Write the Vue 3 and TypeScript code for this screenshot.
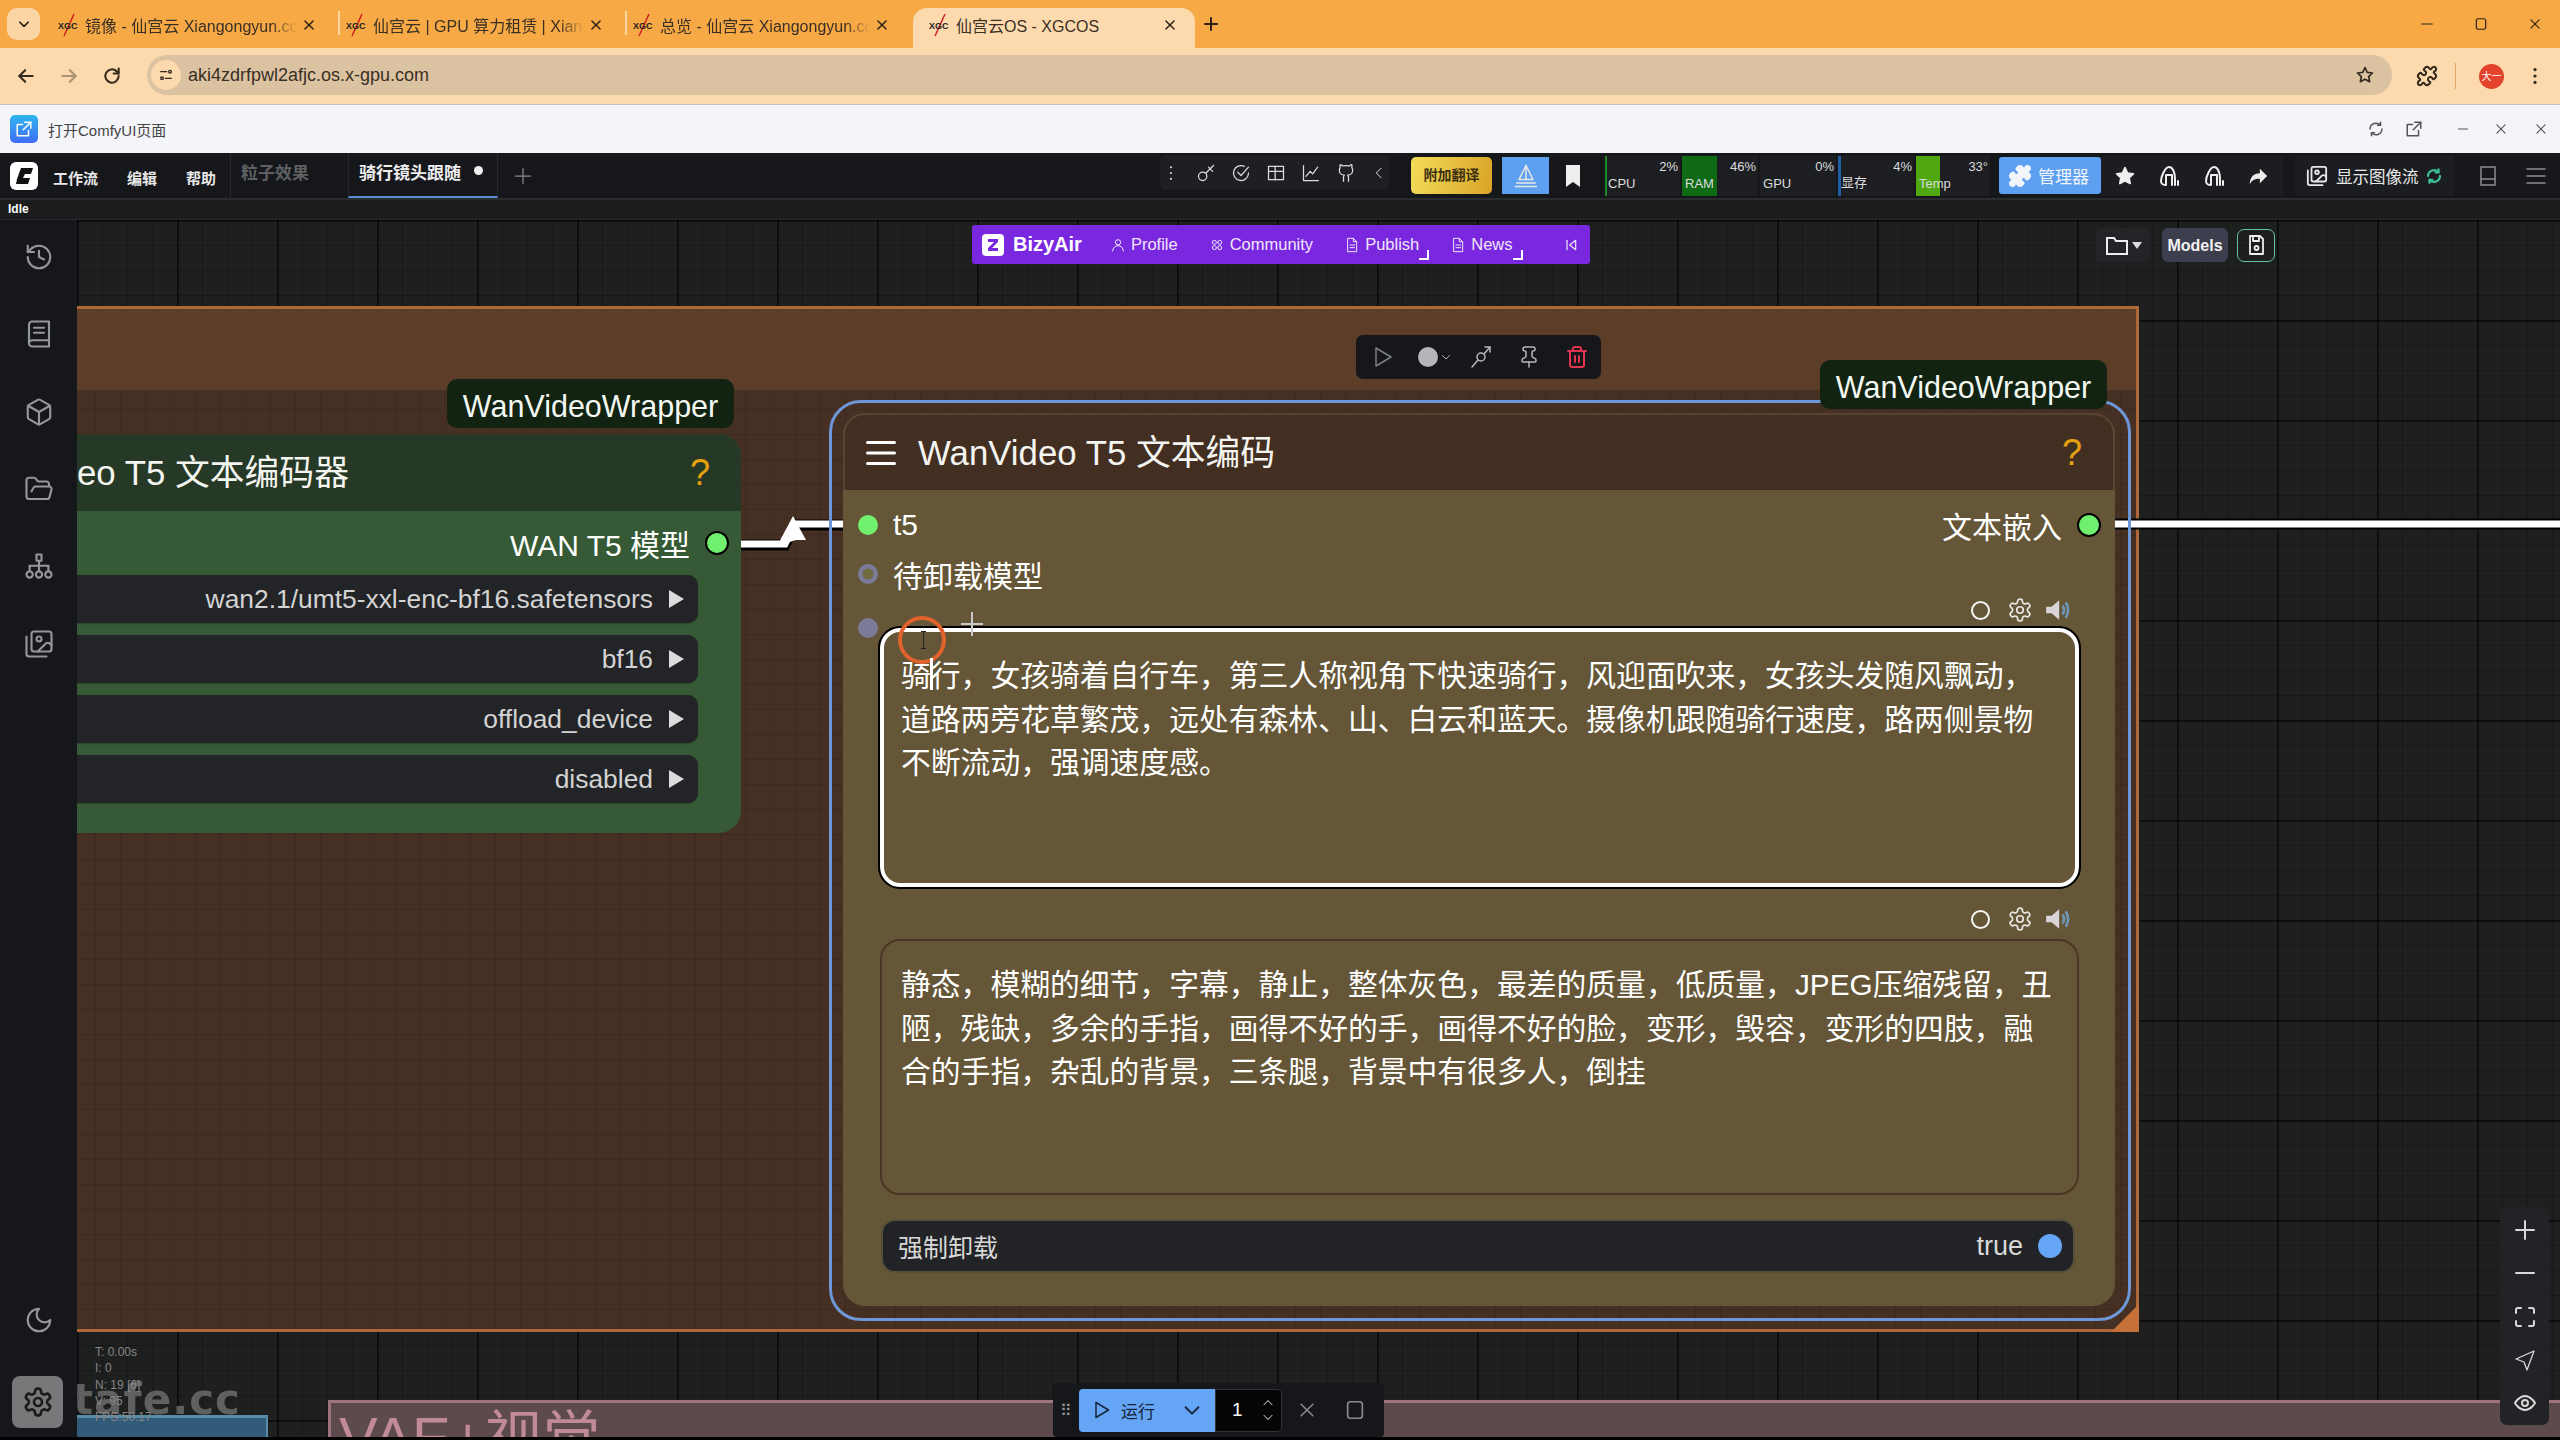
<script setup lang="ts">
import { h } from 'vue';

// stroked icon, paths in a 24x24 box
const Ico = (props: { d: string[]; size?: number; sw?: number }) =>
  h(
    'svg',
    {
      width: props.size ?? 24,
      height: props.size ?? 24,
      viewBox: '0 0 24 24',
      fill: 'none',
      stroke: 'currentColor',
      'stroke-width': props.sw ?? 2,
      'stroke-linecap': 'round',
      'stroke-linejoin': 'round',
      style: 'flex:none;display:block',
    },
    props.d.map((d) => h('path', { d })),
  );
Ico.props = ['d', 'size', 'sw'];

const i = {
  history: ['M3 12a9 9 0 1 0 9-9 9.75 9.75 0 0 0-6.74 2.74L3 8', 'M3 3v5h5', 'M12 7v5l4 2'],
  book: ['M4 19.5v-15A2.5 2.5 0 0 1 6.5 2H20v20H6.5a2.5 2.5 0 0 1 0-5H20', 'M8 7h8', 'M8 11h8'],
  box: ['M21 8a2 2 0 0 0-1-1.73l-7-4a2 2 0 0 0-2 0l-7 4A2 2 0 0 0 3 8v8a2 2 0 0 0 1 1.73l7 4a2 2 0 0 0 2 0l7-4A2 2 0 0 0 21 16Z', 'm3.3 7 8.7 5 8.7-5', 'M12 22V12'],
  folder: ['m6 14 1.5-2.9A2 2 0 0 1 9.24 10H20a2 2 0 0 1 1.94 2.5l-1.54 6a2 2 0 0 1-1.95 1.5H4a2 2 0 0 1-2-2V5a2 2 0 0 1 2-2h3.9a2 2 0 0 1 1.69.9l.81 1.2a2 2 0 0 0 1.67.9H18a2 2 0 0 1 2 2v2'],
  tree: ['M10 2h4v5h-4z', 'M12 7v8', 'M4.500 11h15', 'M4.500 11v4', 'M19.500 11v4', 'M4.500 18m-2.500 0a2.500 2.500 0 1 0 5 0a2.500 2.500 0 1 0-5 0', 'M12 18m-2.500 0a2.500 2.500 0 1 0 5 0a2.500 2.500 0 1 0-5 0', 'M19.500 18m-2.500 0a2.500 2.500 0 1 0 5 0a2.500 2.500 0 1 0-5 0'],
  images: ['M18 22H4a2 2 0 0 1-2-2V6', 'm22 13-1.3-1.3a2.4 2.4 0 0 0-3.4 0L11 18', 'M12 8m-2 0a2 2 0 1 0 4 0a2 2 0 1 0-4 0', 'M8 2h12a2 2 0 0 1 2 2v12a2 2 0 0 1-2 2H8a2 2 0 0 1-2-2V4a2 2 0 0 1 2-2z'],
  moon: ['M12 3a6 6 0 0 0 9 9 9 9 0 1 1-9-9Z'],
  gear: ['M12.22 2h-.44a2 2 0 0 0-2 2v.18a2 2 0 0 1-1 1.73l-.43.25a2 2 0 0 1-2 0l-.15-.08a2 2 0 0 0-2.73.73l-.22.38a2 2 0 0 0 .73 2.73l.15.1a2 2 0 0 1 1 1.72v.51a2 2 0 0 1-1 1.74l-.15.09a2 2 0 0 0-.73 2.73l.22.38a2 2 0 0 0 2.73.73l.15-.08a2 2 0 0 1 2 0l.43.25a2 2 0 0 1 1 1.73V20a2 2 0 0 0 2 2h.44a2 2 0 0 0 2-2v-.18a2 2 0 0 1 1-1.73l.43-.25a2 2 0 0 1 2 0l.15.08a2 2 0 0 0 2.73-.73l.22-.39a2 2 0 0 0-.73-2.73l-.15-.08a2 2 0 0 1-1-1.74v-.5a2 2 0 0 1 1-1.74l.15-.09a2 2 0 0 0 .73-2.73l-.22-.38a2 2 0 0 0-2.73-.73l-.15.08a2 2 0 0 1-2 0l-.43-.25a2 2 0 0 1-1-1.73V4a2 2 0 0 0-2-2z', 'M12 12m-3 0a3 3 0 1 0 6 0a3 3 0 1 0-6 0'],
  trash: ['M3 6h18', 'M19 6v14c0 1-1 2-2 2H7c-1 0-2-1-2-2V6', 'M8 6V4c0-1 1-2 2-2h4c1 0 2 1 2 2v2', 'M10 11v6', 'M14 11v6'],
  pin: ['M12 17v5', 'M9 10.76a2 2 0 0 1-1.11 1.79l-1.78.9A2 2 0 0 0 5 15.24V16a1 1 0 0 0 1 1h12a1 1 0 0 0 1-1v-.76a2 2 0 0 0-1.11-1.79l-1.78-.9A2 2 0 0 1 15 10.76V7a1 1 0 0 1 1-1 2 2 0 0 0 0-4H8a2 2 0 0 0 0 4 1 1 0 0 1 1 1z'],
  play: ['M6 3l15 9-15 9z'],
  link: ['M3 22l6-7', 'M15 9l6-7', 'M16 2h5v5', 'M12 12m-4 0a4 4 0 1 0 8 0a4 4 0 1 0-8 0'],
  key: ['M8 16m-5 0a5 5 0 1 0 10 0a5 5 0 1 0-10 0', 'M12 12l9-9', 'M17 7l3 3', 'M15 5l2 2'],
  check: ['M21 12a9 9 0 1 1-5-8', 'M8 11l4 4 9-10'],
  table: ['M3 4h18v16H3z', 'M3 10h18', 'M11 4v16'],
  chart: ['M3 3v18h18', 'M6 16l5-6 3 3 6-8'],
  github: ['M15 22v-4a4.8 4.8 0 0 0-1-3.5c3 0 6-2 6-5.5.08-1.25-.27-2.48-1-3.5.28-1.15.28-2.35 0-3.5 0 0-1 0-3 1.5-2.64-.5-5.36-.5-8 0C6 2 5 2 5 2c-.3 1.15-.3 2.35 0 3.5A5.4 5.4 0 0 0 4 9c0 3.5 3 5.5 6 5.5-.39.49-.68 1.05-.85 1.65-.17.6-.22 1.23-.15 1.85v4'],
  doc: ['M6 2h8l5 5v15H6z', 'M14 2v5h5', 'M9 12h7', 'M9 16h7'],
  user: ['M12 8m-4 0a4 4 0 1 0 8 0a4 4 0 1 0-8 0', 'M4 21c0-5 4-8 8-8s8 3 8 8'],
  community: ['M8 8m-3 0a3 3 0 1 0 6 0a3 3 0 1 0-6 0', 'M16 8m-3 0a3 3 0 1 0 6 0a3 3 0 1 0-6 0', 'M8 16m-3 0a3 3 0 1 0 6 0a3 3 0 1 0-6 0', 'M16 16m-3 0a3 3 0 1 0 6 0a3 3 0 1 0-6 0'],
  plus: ['M12 3v18', 'M3 12h18'],
  minus: ['M3 12h18'],
  fit: ['M8 3H5a2 2 0 0 0-2 2v3', 'M21 8V5a2 2 0 0 0-2-2h-3', 'M3 16v3a2 2 0 0 0 2 2h3', 'M16 21h3a2 2 0 0 0 2-2v-3'],
  send: ['M21 3L3 11l8 3 3 8z'],
  eye: ['M2 12s4-7 10-7 10 7 10 7-4 7-10 7-10-7-10-7z', 'M12 12m-3 0a3 3 0 1 0 6 0a3 3 0 1 0-6 0'],
  back: ['M20 12H4', 'M11 5l-7 7 7 7'],
  forward: ['M4 12h16', 'M13 5l7 7-7 7'],
  reload: ['M20 12a8 8 0 1 1-2.5-5.8L20 9', 'M20 3v6h-6'],
  star: ['M12 3l2.7 5.8 6.3.8-4.6 4.3 1.2 6.2L12 17l-5.6 3.1 1.2-6.2L3 9.6l6.3-.8z'],
  puzzle: ['M19.439 7.85c-.049.322.059.648.289.878l1.568 1.568c.47.47.706 1.087.706 1.704s-.235 1.233-.706 1.704l-1.611 1.611a.98.98 0 0 1-.837.276c-.47-.07-.802-.48-.968-.925a2.501 2.501 0 1 0-3.214 3.214c.446.166.855.497.925.968a.979.979 0 0 1-.276.837l-1.61 1.61a2.404 2.404 0 0 1-1.705.707 2.402 2.402 0 0 1-1.704-.706l-1.568-1.568a1.026 1.026 0 0 0-.877-.29c-.493.074-.84.504-1.02.968a2.5 2.5 0 1 1-3.237-3.237c.464-.18.894-.527.967-1.02a1.026 1.026 0 0 0-.289-.877l-1.568-1.568A2.402 2.402 0 0 1 1.998 12c0-.617.236-1.234.706-1.704L4.23 8.77c.24-.24.581-.353.917-.303.515.077.877.528 1.073 1.01a2.5 2.5 0 1 0 3.259-3.259c-.482-.196-.933-.558-1.01-1.073-.05-.336.062-.676.303-.917l1.525-1.525A2.402 2.402 0 0 1 12 1.998c.617 0 1.234.236 1.704.706l1.568 1.568c.23.23.556.338.877.29.493-.074.84-.504 1.02-.968a2.5 2.5 0 1 1 3.237 3.237c-.464.18-.894.527-.967 1.02Z'],
  tune: ['M4 7h9', 'M18 7m-2 0a2 2 0 1 0 4 0a2 2 0 1 0-4 0', 'M11 17h9', 'M6 17m-2 0a2 2 0 1 0 4 0a2 2 0 1 0-4 0'],
  panel: ['M5 3h14v18H5z', 'M5 15h14'],
  menu: ['M3 5h18', 'M3 12h18', 'M3 19h18'],
  close: ['M5 5l14 14', 'M19 5L5 19'],
  chevron: ['M5 9l7 7 7-7'],
  up: ['M5 15l7-7 7 7'],
  left: ['M15 5l-7 7 7 7'],
  stop: ['M7 3h10a3 3 0 0 1 3 3v12a3 3 0 0 1-3 3H7a3 3 0 0 1-3-3V6a3 3 0 0 1 3-3z'],
  open: ['M13 3h8v8', 'M21 3l-10 10', 'M18 14v7H3V6h7'],
  refresh: ['M20 12a8 8 0 0 1-14 5', 'M4 12a8 8 0 0 1 14-5', 'M18 3v4h-4', 'M6 21v-4h4'],
  floppy: ['M6 3h10l3 3v15H6z', 'M9 3v5h6V3', 'M12.5 15m-2 0a2 2 0 1 0 4 0a2 2 0 1 0-4 0'],
  dots: ['M12 5h.01', 'M12 12h.01', 'M12 19h.01'],
  collapse: ['M6 5v14', 'M19 5l-9 7 9 7z'],
  shape: ['M8 21a4 4 0 0 1-4-4c0-4 4-14 8-14s6 6 6 12', 'M9 21V11h6v10', 'M18 15v6', 'M21 21v-4'],
  peak: ['M12 3L6 15h12z', 'M12 3v12', 'M4 18h16', 'M3 21h18'],
};

const tabs = [
  { title: '镜像 - 仙宫云 Xiangongyun.com', w: 288, active: false },
  { title: '仙宫云 | GPU 算力租赁 | Xiangongyun', w: 287, active: false },
  { title: '总览 - 仙宫云 Xiangongyun.com', w: 286, active: false },
  { title: '仙宫云OS - XGCOS', w: 282, active: true },
];

const monitors = [
  { label: 'CPU', value: '2%', pct: 2, color: '#1c8a28', w: 75 },
  { label: 'RAM', value: '46%', pct: 46, color: '#0f6a14', w: 76 },
  { label: 'GPU', value: '0%', pct: 0, color: '#1c1e21', w: 76 },
  { label: '显存', value: '4%', pct: 4, color: '#1f5fa8', w: 76 },
  { label: 'Temp', value: '33°', pct: 33, color: '#4fa80f', w: 74 },
];

const leftWidgets = ['wan2.1/umt5-xxl-enc-bf16.safetensors', 'bf16', 'offload_device', 'disabled'];
const stats = ['T: 0.00s', 'I: 0', 'N: 19 [6]', 'V: 95', 'FPS:50.17'];

const positive = '骑行，女孩骑着自行车，第三人称视角下快速骑行，风迎面吹来，女孩头发随风飘动，道路两旁花草繁茂，远处有森林、山、白云和蓝天。摄像机跟随骑行速度，路两侧景物不断流动，强调速度感。';
const negative = '静态，模糊的细节，字幕，静止，整体灰色，最差的质量，低质量，JPEG压缩残留，丑陋，残缺，多余的手指，画得不好的手，画得不好的脸，变形，毁容，变形的四肢，融合的手指，杂乱的背景，三条腿，背景中有很多人，倒挂';
</script>

<template>
  <div class="page">
    <!-- browser tabs -->
    <div class="tabstrip">
      <div class="tab-menu"><Ico :d="i.chevron" :size="14" :sw="3" /></div>
      <div class="tabs">
        <div v-for="t in tabs" :key="t.title" class="tab" :class="{ active: t.active }" :style="{ width: t.w + 'px' }">
          <svg class="fav" width="24" height="26" viewBox="0 0 24 26">
            <path d="M8 24L18 2" stroke="#c22" stroke-width="1.5" />
            <text x="2" y="17" font-size="9" font-weight="700" fill="#222">XGC</text>
          </svg>
          <span class="tab-title">{{ t.title }}</span>
          <Ico :d="i.close" :size="14" :sw="2.5" class="tab-x" />
        </div>
      </div>
      <Ico :d="i.plus" :size="16" :sw="3" class="new-tab" />
      <div class="win">
        <Ico :d="i.minus" :size="14" />
        <Ico :d="i.stop" :size="14" />
        <Ico :d="i.close" :size="14" />
      </div>
    </div>

    <!-- address bar -->
    <div class="urlbar">
      <div class="nav">
        <Ico :d="i.back" :size="20" :sw="2.5" />
        <Ico :d="i.forward" :size="20" :sw="2.5" class="faded" />
        <Ico :d="i.reload" :size="20" :sw="2.5" />
      </div>
      <div class="omni">
        <span class="site"><Ico :d="i.tune" :size="16" /></span>
        <span class="url">aki4zdrfpwl2afjc.os.x-gpu.com</span>
        <Ico :d="i.star" :size="20" class="omni-star" />
      </div>
      <Ico :d="i.puzzle" :size="22" :sw="2.2" class="ext" />
      <span class="sep"></span>
      <span class="avatar">大一</span>
      <Ico :d="i.dots" :size="22" :sw="3.5" class="more" />
    </div>

    <!-- host app header -->
    <div class="apphead">
      <span class="appicon"><Ico :d="i.open" :size="18" /></span>
      <span class="apptitle">打开ComfyUI页面</span>
      <div class="appctl">
        <Ico :d="i.refresh" :size="18" />
        <Ico :d="i.open" :size="18" />
        <Ico :d="i.minus" :size="12" class="ml" />
        <Ico :d="i.close" :size="14" class="ml2" />
        <Ico :d="i.close" :size="14" class="ml3" />
      </div>
    </div>

    <!-- comfy menu -->
    <div class="menubar">
      <div class="logo">
        <svg width="20" height="20" viewBox="0 0 20 20"><path d="M7 2h12l-2 6H11l-2 4h7l-2 6H2l1-5 4-11z" fill="#111" /></svg>
      </div>
      <span class="mi mi1">工作流</span>
      <span class="mi mi2">编辑</span>
      <span class="mi mi3">帮助</span>
      <div class="wftab">粒子效果</div>
      <div class="wftab on">骑行镜头跟随<i class="dirty"></i></div>
      <Ico :d="i.plus" :size="20" :sw="1.5" class="wfplus" />

      <div class="tools">
        <Ico :d="i.dots" :size="20" :sw="2.5" />
        <Ico :d="i.key" :size="20" :sw="1.5" />
        <Ico :d="i.check" :size="20" :sw="1.5" />
        <Ico :d="i.table" :size="20" :sw="1.5" />
        <Ico :d="i.chart" :size="20" :sw="1.5" />
        <Ico :d="i.github" :size="20" :sw="1.5" />
        <Ico :d="i.left" :size="16" :sw="1.5" />
      </div>
      <div class="translate">附加翻译</div>
      <div class="bluebtn"><Ico :d="i.peak" :size="28" :sw="1.3" /></div>
      <div class="bookmark"><svg width="14" height="22" viewBox="0 0 14 22"><path d="M0 0h14v22l-7-5-7 5z" fill="#eee" /></svg></div>
      <div class="monitors">
        <div v-for="m in monitors" :key="m.label" class="mon" :style="{ width: m.w + 'px' }">
          <i class="mon-bar" :style="{ width: Math.max(m.pct, 3) + '%', background: m.color }"></i>
          <span class="mon-val">{{ m.value }}</span>
          <span class="mon-label">{{ m.label }}</span>
        </div>
      </div>
      <div class="manager"><Ico :d="i.puzzle" :size="24" class="solid" />管理器</div>
      <div class="quick">
        <Ico :d="i.star" :size="22" class="solid" />
        <Ico :d="i.shape" :size="24" />
        <Ico :d="i.shape" :size="24" />
        <svg width="22" height="22" viewBox="0 0 24 24"><path d="M14 4l8 8-8 8v-5c-6 0-9 2-11 6 0-7 4-12 11-12z" fill="#eee" /></svg>
      </div>
      <div class="imgfeed">
        <Ico :d="i.images" :size="22" />
        <span>显示图像流</span>
        <Ico :d="i.refresh" :size="18" :sw="3" class="teal" />
      </div>
      <Ico :d="i.panel" :size="24" :sw="1.5" class="panelbtn" />
      <Ico :d="i.menu" :size="24" :sw="1.5" class="hamb" />
    </div>
    <div class="idle">Idle</div>

    <div class="workspace">
      <!-- left rail -->
      <aside class="rail">
        <Ico :d="i.history" :size="30" :sw="1.7" />
        <Ico :d="i.book" :size="30" :sw="1.7" />
        <Ico :d="i.box" :size="30" :sw="1.7" />
        <Ico :d="i.folder" :size="30" :sw="1.7" />
        <Ico :d="i.tree" :size="30" :sw="1.7" />
        <Ico :d="i.images" :size="30" :sw="1.7" />
        <Ico :d="i.moon" :size="30" :sw="1.7" class="moon" />
      </aside>

      <!-- node canvas -->
      <main class="canvas">
        <div class="group">
          <div class="group-head"></div>
          <i class="group-corner"></i>
        </div>
        <div class="pinkgroup">VAE+视觉</div>
        <div class="bluenode"></div>
        <div class="watermark">tafe.cc</div>
        <div class="stats"><div v-for="s in stats" :key="s">{{ s }}</div></div>

        <svg class="wires" viewBox="77 220 2483 1217" width="2483" height="1217">
          <g fill="none" stroke="#000" stroke-width="11">
            <path d="M741 545H785L795 525H843" />
            <path d="M2115 524H2560" />
          </g>
          <g fill="none" stroke="#fff" stroke-width="7">
            <path d="M741 544H785L795 524H843" />
            <path d="M2115 524H2560" />
          </g>
          <path d="M777 546L793 516L806 540L796 540Z" fill="#fff" />
        </svg>

        <!-- loader node, partly under the rail -->
        <section class="node loader">
          <div class="tag">WanVideoWrapper</div>
          <header class="node-title green">
            <span class="t-gap"></span>
            <span class="t-text">WanVideo T5 文本编码器</span>
            <span class="help">?</span>
          </header>
          <div class="node-body">
            <div class="row right">
              <span>WAN T5 模型</span>
              <i class="port green-dot"></i>
            </div>
            <div class="combo-list">
              <div v-for="w in leftWidgets" :key="w" class="combo">
                <span>{{ w }}</span>
                <i class="arrow"></i>
              </div>
            </div>
          </div>
        </section>

        <div class="selection"></div>

        <!-- text encode node -->
        <section class="node encoder">
          <div class="tag">WanVideoWrapper</div>
          <header class="node-title brown">
            <Ico :d="i.menu" :size="36" :sw="2" class="t-menu" />
            <span class="t-text">WanVideo T5 文本编码</span>
            <span class="help">?</span>
          </header>
          <div class="node-body enc-body">
            <div class="row between">
              <span class="slot"><i class="port bare"></i>t5</span>
              <span class="slot">文本嵌入<i class="port green-dot"></i></span>
            </div>
            <div class="row">
              <span class="slot"><i class="port grey"></i>待卸载模型</span>
            </div>
            <i class="port solo"></i>
            <div class="widgets">
              <div class="mini">
                <i class="ring"></i>
                <Ico :d="i.gear" :size="26" :sw="1.6" />
                <svg width="26" height="26" viewBox="0 0 24 24"><path d="M2 9h5l7-6v18l-7-6H2z" fill="#d8d4d8" /><path d="M17 8c2 2 2 6 0 8M20 5c3 4 3 10 0 14" stroke="#6f96b8" stroke-width="2.5" fill="none" /></svg>
              </div>
              <div class="prompt focus">{{ positive }}</div>
              <div class="mini second">
                <i class="ring"></i>
                <Ico :d="i.gear" :size="26" :sw="1.6" />
                <svg width="26" height="26" viewBox="0 0 24 24"><path d="M2 9h5l7-6v18l-7-6H2z" fill="#d8d4d8" /><path d="M17 8c2 2 2 6 0 8M20 5c3 4 3 10 0 14" stroke="#6f96b8" stroke-width="2.5" fill="none" /></svg>
              </div>
              <div class="prompt neg">{{ negative }}</div>
              <div class="toggle">
                <span>强制卸载</span>
                <span class="toggle-val">true<i></i></span>
              </div>
            </div>
          </div>
        </section>

        <!-- cursor marks -->
        <div class="cursor-ring"><i></i></div>
        <i class="caret"></i>
        <div class="crosshair"></div>

        <!-- selection toolbox -->
        <div class="toolbox">
          <Ico :d="i.play" :size="24" :sw="1.5" class="dim" />
          <span class="color"><i></i><Ico :d="i.chevron" :size="12" :sw="2" /></span>
          <Ico :d="i.link" :size="24" :sw="1.5" />
          <Ico :d="i.pin" :size="24" :sw="1.5" />
          <Ico :d="i.trash" :size="24" :sw="2" class="red" />
        </div>

        <!-- bizyair bar -->
        <div class="bizy">
          <span class="bizy-logo">
            <svg width="22" height="22" viewBox="0 0 22 22"><rect width="22" height="22" rx="4" fill="#fff" /><path d="M6 5h10v3l-6 6h6v3H6v-3l6-6H6z" fill="#7a28e0" /></svg>
            BizyAir
          </span>
          <span class="bi"><Ico :d="i.user" :size="16" :sw="1.5" />Profile</span>
          <span class="bi"><Ico :d="i.community" :size="16" :sw="1.5" />Community</span>
          <span class="bi drop"><Ico :d="i.doc" :size="16" :sw="1.5" />Publish</span>
          <span class="bi drop"><Ico :d="i.doc" :size="16" :sw="1.5" />News</span>
          <Ico :d="i.collapse" :size="16" :sw="1.8" class="bizy-end" />
        </div>

        <div class="assets">
          <div class="folderbtn">
            <svg width="24" height="22" viewBox="0 0 24 22" fill="none" stroke="#eee" stroke-width="2"><path d="M2 4h7l2 3h11v13H2z" /></svg>
            <svg width="10" height="10" viewBox="0 0 10 10"><path d="M0 2h10L5 9z" fill="#ddd" /></svg>
          </div>
          <div class="modelsbtn">Models</div>
          <div class="savebtn"><Ico :d="i.floppy" :size="24" :sw="1.8" /></div>
        </div>

        <!-- queue bar -->
        <div class="runbar">
          <span class="grip">⠿</span>
          <div class="runbtn">
            <Ico :d="i.play" :size="20" :sw="1.8" />
            <span>运行</span>
            <Ico :d="i.chevron" :size="22" :sw="2" class="runchev" />
          </div>
          <div class="count">
            <span>1</span>
            <div class="steppers">
              <Ico :d="i.up" :size="14" :sw="1.8" />
              <Ico :d="i.chevron" :size="14" :sw="1.8" />
            </div>
          </div>
          <Ico :d="i.close" :size="20" :sw="1.8" class="runx" />
          <Ico :d="i.stop" :size="22" :sw="1.8" class="runstop" />
        </div>

        <!-- zoom controls -->
        <div class="zoomctl">
          <Ico :d="i.plus" :size="24" :sw="2" />
          <Ico :d="i.minus" :size="24" :sw="2" />
          <Ico :d="i.fit" :size="24" :sw="2" />
          <Ico :d="i.send" :size="24" :sw="1.3" />
          <Ico :d="i.eye" :size="24" :sw="2" />
        </div>
      </main>

      <!-- settings button sits on top of rail and canvas -->
      <div class="settings"><Ico :d="i.gear" :size="32" :sw="2" /></div>
    </div>
  </div>
</template>

<style scoped>
.page {
  width: 2560px;
  height: 1440px;
  overflow: hidden;
  background: #000;
  font-family: "Liberation Sans", "Noto Sans CJK SC", sans-serif;
  color: #fff;
  position: relative;
}

/* browser chrome */
.tabstrip {
  height: 48px;
  background: #f6a945;
  display: flex;
  color: #2a2218;
  position: relative;
}
.tab-menu {
  width: 33px;
  height: 32px;
  margin: 8px 0 0 7px;
  border-radius: 10px;
  background: #fbd5a4;
  display: flex;
  align-items: center;
  justify-content: center;
}
.tabs {
  display: flex;
  margin-left: 12px;
  padding-top: 8px;
}
.tab {
  height: 40px;
  display: flex;
  align-items: center;
  padding: 0 24px 6px 4px;
  box-sizing: border-box;
  gap: 5px;
  position: relative;
}
.tab:nth-child(-n+2)::after {
  content: "";
  position: absolute;
  right: 0;
  top: 3px;
  height: 24px;
  width: 2px;
  background: #fbd5a4;
}
.tab.active {
  background: #fdd9ae;
  border-radius: 14px 14px 0 0;
  padding-left: 14px;
  padding-right: 18px;
}
.fav { flex: none; }
.tab-title {
  flex: 1;
  min-width: 0;
  font-size: 16px;
  white-space: nowrap;
  overflow: hidden;
  color: #3a3024;
  -webkit-mask-image: linear-gradient(90deg, #000 88%, transparent);
  mask-image: linear-gradient(90deg, #000 88%, transparent);
}
.tab.active .tab-title { -webkit-mask-image: none; mask-image: none; }
.new-tab { margin: 16px 0 0 8px; }
.win {
  margin-left: auto;
  display: flex;
  gap: 40px;
  padding: 17px 18px 0 0;
}
.urlbar {
  height: 57px;
  background: #fdd9ae;
  border-bottom: 1px solid #c9c4bd;
  box-sizing: border-box;
  display: flex;
  align-items: center;
  color: #33291c;
}
.nav {
  display: flex;
  gap: 23px;
  margin-left: 16px;
  width: 131px;
}
.faded { opacity: 0.4; }
.omni {
  width: 2245px;
  height: 40px;
  margin-top: -2px;
  border-radius: 20px;
  background: #dbc3a2;
  display: flex;
  align-items: center;
  flex: none;
}
.site {
  width: 30px;
  height: 30px;
  margin-left: 4px;
  border-radius: 50%;
  background: #fdd9ae;
  display: flex;
  align-items: center;
  justify-content: center;
}
.url {
  margin-left: 7px;
  font-size: 18px;
  color: #3a2f24;
}
.omni-star { margin-left: auto; margin-right: 17px; }
.ext { margin-left: 24px; }
.sep { width: 1px; height: 26px; background: #e0a860; margin-left: 17px; }
.avatar {
  width: 25px;
  height: 25px;
  margin-left: 23px;
  border-radius: 50%;
  background: #e2432a;
  color: #fff;
  font-size: 10px;
  line-height: 25px;
  text-align: center;
}
.more { margin-left: 20px; }
.apphead {
  height: 48px;
  background: #f3f5f9;
  display: flex;
  align-items: center;
  color: #555;
}
.appicon {
  width: 28px;
  height: 28px;
  margin-left: 10px;
  border-radius: 5px;
  background: linear-gradient(#2fb5f0, #3f6df5);
  color: #fff;
  display: flex;
  align-items: center;
  justify-content: center;
}
.apptitle {
  margin-left: 10px;
  font-size: 15px;
  color: #444;
}
.appctl {
  margin-left: auto;
  display: flex;
  align-items: center;
  gap: 20px;
  padding-right: 12px;
}
.ml { margin-left: 14px; }
.ml2 { margin-left: 5px; }
.ml3 { margin-left: 6px; }

/* comfy top bar */
.menubar {
  height: 47px;
  background: #15171b;
  border-bottom: 2px solid #2a2c2e;
  box-sizing: border-box;
  display: flex;
  align-items: center;
  color: #e8e8e8;
}
.logo {
  width: 28px;
  height: 28px;
  margin-left: 10px;
  border-radius: 6px;
  background: #fff;
  display: flex;
  align-items: center;
  justify-content: center;
  flex: none;
}
.mi { font-size: 15px; font-weight: 700; white-space: nowrap; margin-top: 4px; }
.mi1 { margin-left: 15px; }
.mi2 { margin-left: 29px; }
.mi3 { margin-left: 29px; }
.wftab {
  height: 45px;
  padding: 6px 10px 0;
  box-sizing: border-box;
  margin-left: 14px;
  width: 118px;
  font-size: 17px;
  font-weight: 700;
  color: #5f6062;
  border-left: 1px solid #26282b;
  white-space: nowrap;
  align-self: flex-start;
}
.wftab.on {
  margin-left: 0;
  width: 150px;
  color: #eee;
  border-right: 1px solid #26282b;
  border-bottom: 2px solid #5b8bd0;
  display: flex;
  align-items: flex-start;
}
.dirty {
  width: 9px;
  height: 9px;
  border-radius: 50%;
  background: #eee;
  margin: 7px 0 0 13px;
}
.wfplus { margin-left: 15px; color: #8a8a8a; }
.tools {
  margin-left: 627px;
  width: 230px;
  height: 35px;
  margin-top: -6px;
  flex: none;
  background: #1d1f22;
  border-radius: 6px;
  display: flex;
  align-items: center;
  justify-content: space-between;
  padding: 0 3px 0 1px;
  box-sizing: border-box;
  color: #ddd;
}
.translate {
  margin-left: 21px;
  width: 81px;
  height: 37px;
  flex: none;
  border-radius: 5px;
  background: linear-gradient(100deg, #f3dc5a, #d9a428);
  color: #3b2f10;
  font-size: 14px;
  font-weight: 700;
  line-height: 37px;
  text-align: center;
}
.bluebtn {
  margin-left: 10px;
  width: 47px;
  height: 37px;
  flex: none;
  background: #5ea0f0;
  display: flex;
  align-items: center;
  justify-content: center;
}
.bookmark {
  width: 39px;
  margin-left: 4px;
  flex: none;
  display: flex;
  justify-content: center;
}
.monitors {
  display: flex;
  margin-left: 13px;
  gap: 2px;
  flex: none;
}
.mon {
  height: 40px;
  position: relative;
  background: #1c1e21;
  font-size: 13px;
  color: #ddd;
  overflow: hidden;
}
.mon-bar {
  position: absolute;
  left: 0;
  top: 0;
  bottom: 0;
}
.mon-val {
  position: absolute;
  right: 2px;
  top: 3px;
}
.mon-label {
  position: absolute;
  left: 3px;
  bottom: 5px;
}
.manager {
  margin-left: 9px;
  width: 102px;
  height: 37px;
  flex: none;
  background: #5ea0f0;
  border-radius: 3px;
  display: flex;
  align-items: center;
  gap: 6px;
  padding-left: 9px;
  box-sizing: border-box;
  font-size: 17px;
  color: #f2f6fb;
}
.solid { fill: currentColor; }
.quick {
  width: 182px;
  height: 40px;
  flex: none;
  background: #1b1d20;
  display: flex;
  align-items: center;
  gap: 21px;
  padding-left: 13px;
  box-sizing: border-box;
  color: #eee;
}
.imgfeed {
  margin-left: 12px;
  width: 159px;
  height: 40px;
  flex: none;
  background: #1b1d20;
  display: flex;
  align-items: center;
  gap: 8px;
  padding-left: 11px;
  box-sizing: border-box;
  font-size: 16.5px;
  white-space: nowrap;
}
.teal { color: #3bbf9a; margin-left: -2px; }
.panelbtn { margin-left: 22px; color: #8a8d91; }
.hamb { margin-left: 24px; color: #8a8d91; }
.idle {
  height: 20px;
  background: #1a1c1e;
  border-bottom: 1px solid #26282a;
  box-sizing: border-box;
  padding-left: 8px;
  font-size: 12px;
  font-weight: 700;
  line-height: 18px;
}

/* workspace */
.workspace {
  height: 1217px;
  display: flex;
  position: relative;
}
.rail {
  width: 77px;
  flex: none;
  background: #15171b;
  display: flex;
  flex-direction: column;
  align-items: center;
  padding-top: 22px;
  gap: 47.4px;
  box-sizing: border-box;
  color: #96979b;
  position: relative;
  z-index: 2;
}
.moon { margin-top: 599px; }
.settings {
  position: absolute;
  left: 12px;
  top: 1156px;
  width: 51px;
  height: 52px;
  border-radius: 8px;
  background: #77787a;
  color: #1b1b1c;
  display: flex;
  align-items: center;
  justify-content: center;
  z-index: 3;
}
.canvas {
  flex: 1;
  position: relative;
  overflow: hidden;
  background-color: #1e2020;
  background-image:
    linear-gradient(90deg, rgba(0, 0, 0, 0.5) 2px, transparent 2px),
    linear-gradient(rgba(0, 0, 0, 0.5) 2px, transparent 2px),
    linear-gradient(90deg, rgba(0, 0, 0, 0.24) 1px, transparent 1px),
    linear-gradient(rgba(0, 0, 0, 0.24) 1px, transparent 1px);
  background-size: 100px 100px, 100px 100px, 25px 25px, 25px 25px;
}
.group {
  position: absolute;
  left: -10px;
  top: 86px;
  width: 2072px;
  height: 1026px;
  box-sizing: border-box;
  border: 3px solid #b0683a;
  background-color: #453023;
  background-image:
    linear-gradient(90deg, rgba(0, 0, 0, 0.1) 1px, transparent 1px),
    linear-gradient(rgba(0, 0, 0, 0.1) 1px, transparent 1px);
  background-size: 25px 25px;
}
.group-head {
  height: 81px;
  background: #5c3d28;
}
.group-corner {
  position: absolute;
  right: -3px;
  bottom: -3px;
  width: 0;
  height: 0;
  border-left: 28px solid transparent;
  border-bottom: 28px solid #c6713a;
}
.pinkgroup {
  position: absolute;
  left: 251px;
  top: 1180px;
  right: 0;
  height: 60px;
  border-top: 3px solid #9b7480;
  border-left: 3px solid #9b7480;
  background: #5c4a4d;
  color: #c08b96;
  font-size: 58px;
  line-height: 70px;
  padding-left: 8px;
  white-space: nowrap;
}
.bluenode {
  position: absolute;
  left: 0;
  top: 1195px;
  width: 191px;
  height: 40px;
  background: #315b78;
  border-top: 3px solid #5a8ba5;
  border-right: 2px solid #5a8ba5;
  box-sizing: border-box;
}
.watermark {
  position: absolute;
  left: -4px;
  top: 1155px;
  font-family: "DejaVu Sans", sans-serif;
  font-size: 42px;
  font-weight: 700;
  letter-spacing: 1px;
  color: rgba(140, 140, 140, 0.6);
  filter: blur(0.7px);
  z-index: 3;
}
.stats {
  position: absolute;
  left: 18px;
  top: 1124px;
  font-size: 12px;
  line-height: 16.3px;
  color: #878787;
  z-index: 3;
}
.wires {
  position: absolute;
  left: 0;
  top: 0;
}
.selection {
  position: absolute;
  left: 752px;
  top: 180px;
  width: 1302px;
  height: 921px;
  box-sizing: border-box;
  border: 3px solid #6d97d6;
  border-radius: 32px;
}

/* nodes */
.node {
  position: absolute;
  box-sizing: border-box;
  border-radius: 22px;
}
.loader {
  left: -195px;
  top: 214px;
  width: 859px;
  height: 399px;
  background: #365a35;
}
.encoder {
  left: 766px;
  top: 193px;
  width: 1272px;
  height: 893px;
  background: #645636;
}
.tag {
  position: absolute;
  right: 7px;
  top: -55px;
  width: 287px;
  height: 49px;
  border-radius: 10px;
  background: #122312;
  font-size: 30.5px;
  line-height: 54px;
  text-align: center;
  white-space: nowrap;
  color: #f4f8f2;
  z-index: 1;
}
.encoder .tag { right: 8px; top: -53px; }
.node-title {
  height: 77px;
  border-radius: 22px 22px 0 0;
  display: flex;
  align-items: center;
  font-size: 34.8px;
  white-space: nowrap;
}
.green { background: #263826; }
.brown { background: #432f22; border: 2px solid #584433; border-bottom: none; box-sizing: border-box; }
.t-gap { width: 75px; flex: none; }
.t-menu { margin-left: 18px; margin-right: 19px; }
.t-text { color: #f4f4f0; margin-top: -6px; }
.help {
  margin-left: auto;
  margin-right: 31px;
  color: #e6a10e;
  font-size: 36px;
}
.row {
  height: 34px;
  display: flex;
  align-items: center;
  font-size: 30px;
  margin-bottom: 15px;
  white-space: nowrap;
}
.row.right {
  justify-content: flex-end;
  gap: 15px;
  padding-right: 12px;
  height: 36px;
  margin: 14px 0;
}
.row.between { justify-content: space-between; }
.slot {
  display: flex;
  align-items: center;
  gap: 15px;
}
.port {
  width: 20px;
  height: 20px;
  border-radius: 50%;
  flex: none;
  box-sizing: content-box;
}
.green-dot {
  background: #70f06e;
  border: 2px solid #000;
}
.bare { background: #70f06e; margin-left: 15px; }
.grey {
  background: radial-gradient(circle, #6f6a40 0 5px, #7b7b99 6px);
  margin-left: 15px;
}
.solo {
  position: absolute;
  left: 15px;
  top: 128px;
  background: #7b7b99;
}
.enc-body { padding-top: 18px; position: relative; }
.enc-body .row.between { padding-right: 14px; }
.node-body { position: relative; }
.combo-list {
  display: flex;
  flex-direction: column;
  gap: 12px;
}
.combo {
  height: 48px;
  margin-right: 43px;
  background: #232427;
  border-radius: 10px;
  display: flex;
  align-items: center;
  justify-content: flex-end;
  padding-right: 14px;
  font-size: 26.4px;
  color: #d3d3d3;
  box-shadow: 0 1px 2px rgba(0, 0, 0, 0.2);
}
.arrow {
  width: 0;
  height: 0;
  margin-left: 16px;
  border-left: 15px solid #dcdcdc;
  border-top: 9px solid transparent;
  border-bottom: 9px solid transparent;
}
.widgets { padding: 0 36px 0 37px; margin-top: -6px; }
.mini {
  height: 20px;
  display: flex;
  align-items: center;
  justify-content: flex-end;
  gap: 11px;
  padding-right: 9px;
  color: #e8e6e0;
}
.mini.second { margin-top: 22px; }
.ring {
  width: 15px;
  height: 15px;
  border: 2px solid #f4f4f0;
  border-radius: 50%;
  margin-right: 6px;
}
.prompt {
  box-sizing: border-box;
  margin-top: 8px;
  font-size: 29.8px;
  line-height: 43.5px;
  color: #fff;
  background: #645636;
}
.focus {
  height: 259px;
  border: 4px solid #fff;
  border-radius: 20px;
  outline: 2px solid #000;
  outline-offset: 0;
  padding: 22px 22px 22px 17px;
}
.neg {
  height: 256px;
  margin-top: 10px;
  border: 2px solid #4b3524;
  border-radius: 20px;
  padding: 22px 22px 22px 19px;
}
.toggle {
  height: 50px;
  margin: 26px 6px 0 3px;
  background: #222326;
  border-radius: 12px;
  display: flex;
  align-items: center;
  justify-content: space-between;
  padding: 0 4px 0 15px;
  font-size: 25px;
  color: #d8d8d8;
  box-shadow: 0 0 0 2px #55503a;
}
.toggle-val {
  display: flex;
  align-items: center;
  gap: 15px;
  font-size: 27px;
}
.toggle-val i {
  width: 24px;
  height: 24px;
  border-radius: 50%;
  background: #64a5f5;
  margin-right: 7px;
}

/* cursor */
.cursor-ring {
  position: absolute;
  left: 821px;
  top: 396px;
  width: 48px;
  height: 48px;
  box-sizing: border-box;
  border: 4px solid #e0622c;
  border-radius: 50%;
  display: flex;
  justify-content: center;
  align-items: center;
}
.cursor-ring i {
  width: 5px;
  height: 16px;
  border-top: 1px solid #222;
  border-bottom: 1px solid #222;
  background: linear-gradient(90deg, transparent 2px, #222 2px, #222 3px, transparent 3px);
  margin-left: 3px;
}
.caret {
  position: absolute;
  left: 853px;
  top: 438px;
  width: 3px;
  height: 32px;
  background: #fff;
}
.crosshair {
  position: absolute;
  left: 884px;
  top: 392px;
  width: 22px;
  height: 24px;
  background:
    linear-gradient(#c8c8c8, #c8c8c8) center / 22px 2px no-repeat,
    linear-gradient(#c8c8c8, #c8c8c8) center / 2px 24px no-repeat;
}

/* floating panels */
.toolbox {
  position: absolute;
  left: 1279px;
  top: 115px;
  width: 245px;
  height: 44px;
  box-sizing: border-box;
  background: #15171b;
  border-radius: 7px;
  display: flex;
  align-items: center;
  gap: 24px;
  padding-left: 14px;
  color: #b8b8bc;
  z-index: 3;
}
.dim { color: #7d7f83; }
.red { color: #e0344f; }
.color {
  display: flex;
  align-items: center;
  gap: 2px;
  margin-right: -7px;
}
.color i {
  width: 20px;
  height: 20px;
  border-radius: 50%;
  background: #b5b5bb;
}
.bizy {
  position: absolute;
  left: 895px;
  top: 5px;
  width: 618px;
  height: 39px;
  border-radius: 3px;
  background: #7a28e0;
  display: flex;
  align-items: center;
  font-size: 16.5px;
  padding-left: 10px;
  box-sizing: border-box;
  color: #efe6fb;
}
.bizy-logo {
  display: flex;
  align-items: center;
  gap: 9px;
  font-size: 20px;
  font-weight: 700;
  color: #fff;
  margin-right: 28px;
}
.bi {
  display: flex;
  align-items: center;
  gap: 5px;
  margin-right: 31px;
  position: relative;
}
.drop::after {
  content: "";
  position: absolute;
  right: -10px;
  bottom: -6px;
  width: 8px;
  height: 8px;
  border-right: 2px solid #fff;
  border-bottom: 2px solid #fff;
}
.bizy-end { position: absolute; right: 11px; top: 12px; }
.assets {
  position: absolute;
  left: 2019px;
  top: 8px;
  display: flex;
  align-items: center;
}
.folderbtn {
  width: 54px;
  height: 34px;
  background: #222427;
  border-radius: 5px;
  display: flex;
  align-items: center;
  justify-content: center;
  gap: 3px;
}
.modelsbtn {
  margin-left: 12px;
  width: 66px;
  height: 34px;
  background: #3d3f4e;
  border-radius: 6px;
  font-size: 16px;
  font-weight: 700;
  line-height: 36px;
  text-align: center;
  color: #f2f2f2;
}
.savebtn {
  margin-left: 9px;
  width: 38px;
  height: 33px;
  box-sizing: border-box;
  border: 1px solid #5fc4a9;
  border-radius: 7px;
  display: flex;
  align-items: center;
  justify-content: center;
  color: #eee;
}
.runbar {
  position: absolute;
  left: 976px;
  top: 1163px;
  width: 331px;
  height: 54px;
  background: #15171a;
  border-radius: 4px;
  display: flex;
  align-items: center;
  box-sizing: border-box;
  z-index: 4;
}
.grip {
  width: 26px;
  font-size: 16px;
  color: #999;
  text-align: center;
}
.runbtn {
  width: 136px;
  height: 43px;
  flex: none;
  background: #64a5f5;
  border-radius: 4px 0 0 4px;
  display: flex;
  align-items: center;
  padding-left: 12px;
  box-sizing: border-box;
  gap: 10px;
  font-size: 17px;
  color: #15243a;
}
.runchev { margin-left: auto; margin-right: 12px; }
.count {
  width: 67px;
  height: 43px;
  box-sizing: border-box;
  background: #050505;
  border: 1px solid #333;
  border-radius: 0 5px 5px 0;
  display: flex;
  align-items: center;
  padding-left: 16px;
  font-size: 19px;
}
.steppers {
  margin-left: auto;
  color: #aaa;
  padding-right: 6px;
}
.runx { margin-left: 15px; color: #8b8b8e; }
.runstop { margin-left: 27px; color: #8b8b8e; }
.zoomctl {
  position: absolute;
  left: 2423px;
  top: 987px;
  width: 49px;
  height: 218px;
  box-sizing: border-box;
  background: #222326;
  border-radius: 7px;
  display: flex;
  flex-direction: column;
  align-items: center;
  justify-content: space-between;
  padding: 11px 0 10px;
  color: #d8d8d8;
}
</style>

<style>
html, body { margin: 0; background: #000; }
</style>
